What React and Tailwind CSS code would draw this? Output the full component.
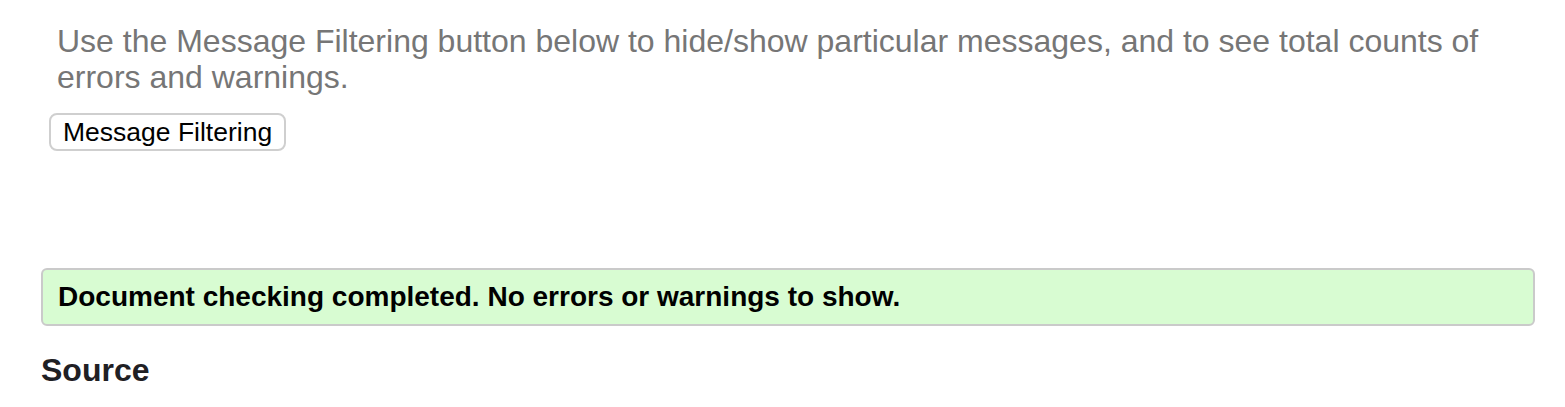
import React from "react";

const App = () => {
  return (
    <div className="min-h-screen bg-white pl-[41px] pr-[30px] font-['Liberation_Sans',Arial,sans-serif]">
      <p className="ml-4 mr-8 pt-[23px] text-[32px] leading-[36px] text-[#767676]">
        Use the Message Filtering button below to hide/show particular messages, and to see total counts of errors and warnings.
      </p>

      <div className="ml-2 mt-[18px]">
        <button className="h-[38px] rounded-lg border-2 border-[#cfcfcf] bg-white px-[12px] text-[26.5px] leading-none text-black">
          Message Filtering
        </button>
      </div>

      <div className="mt-[117px] rounded-md border-2 border-[#cacaca] bg-[#d8fcd2] px-[15px] py-[11px]">
        <p className="text-[28px] font-bold leading-[32px] text-black">
          Document checking completed. No errors or warnings to show.
        </p>
      </div>

      <h2 className="mt-[26px] text-[32px] font-bold leading-[36px] text-[#1f2024]">
        Source
      </h2>
    </div>
  );
};

export default App;
